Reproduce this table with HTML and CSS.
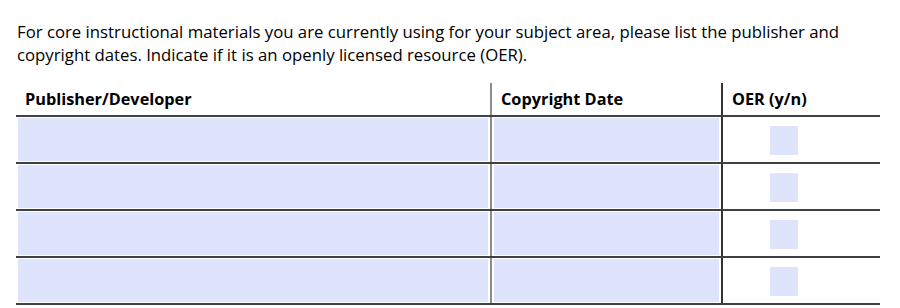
FILE: index.html
```html
<!DOCTYPE html>
<html lang="en">
<head>
    <meta charset="UTF-8">
    <meta name="viewport" content="width=device-width, initial-scale=1.0">
    <title>Instructional Materials</title>
    <link rel="stylesheet" href="styles.css">
</head>
<body>

    <div class="form-section">
        <p class="prompt">For core instructional materials you are currently using for your subject area, please list the publisher and copyright dates. Indicate if it is an openly licensed resource (OER).</p>

        <table class="materials">
            <colgroup>
                <col class="w-publisher">
                <col class="w-date">
                <col class="w-oer">
            </colgroup>
            <thead>
                <tr>
                    <th>Publisher/Developer</th>
                    <th class="col-date">Copyright Date</th>
                    <th class="col-oer">OER (y/n)</th>
                </tr>
            </thead>
            <tbody>
                <tr>
                    <td><input type="text" class="field"></td>
                    <td class="col-date"><input type="text" class="field"></td>
                    <td class="col-oer"><input type="text" class="box" maxlength="1"></td>
                </tr>
                <tr>
                    <td><input type="text" class="field"></td>
                    <td class="col-date"><input type="text" class="field"></td>
                    <td class="col-oer"><input type="text" class="box" maxlength="1"></td>
                </tr>
                <tr>
                    <td><input type="text" class="field"></td>
                    <td class="col-date"><input type="text" class="field"></td>
                    <td class="col-oer"><input type="text" class="box" maxlength="1"></td>
                </tr>
                <tr>
                    <td><input type="text" class="field"></td>
                    <td class="col-date"><input type="text" class="field"></td>
                    <td class="col-oer"><input type="text" class="box" maxlength="1"></td>
                </tr>
            </tbody>
        </table>
    </div>

</body>
</html>
```

FILE: styles.css
```css
body {
    margin: 0;
    background: #ffffff;
    color: #000000;
    font-family: "Open Sans", Lato, sans-serif;
}
.form-section {
    padding: 20px 20px 0 16px;
}
.prompt {
    margin: 0 0 17px 1px;
    font-size: 16.75px;
    line-height: 23px;
    width: 850px;
}
.materials {
    border-collapse: collapse;
    table-layout: fixed;
    width: 864px;
}
.w-publisher { width: 475px; }
.w-date { width: 231px; }
.w-oer { width: 158px; }
.materials th {
    height: 32px;
    padding: 0 0 0 9px;
    text-align: left;
    font-size: 16.3px;
    font-weight: bold;
    border-bottom: 2px solid #404040;
}
.materials td {
    height: 43px;
    padding: 1px 2px;
    vertical-align: top;
    border-bottom: 2px solid #404040;
}
.col-date {
    border-left: 2px solid #8c8c8c;
}
.col-oer {
    border-left: 2px solid #333333;
}
.field {
    display: block;
    box-sizing: border-box;
    width: 100%;
    height: 43px;
    border: none;
    background: #dde4fc;
    outline: none;
}
.box {
    display: block;
    box-sizing: border-box;
    width: 28px;
    height: 29px;
    margin: 8px 0 0 45px;
    border: none;
    background: #dde4fc;
    outline: none;
}
```
